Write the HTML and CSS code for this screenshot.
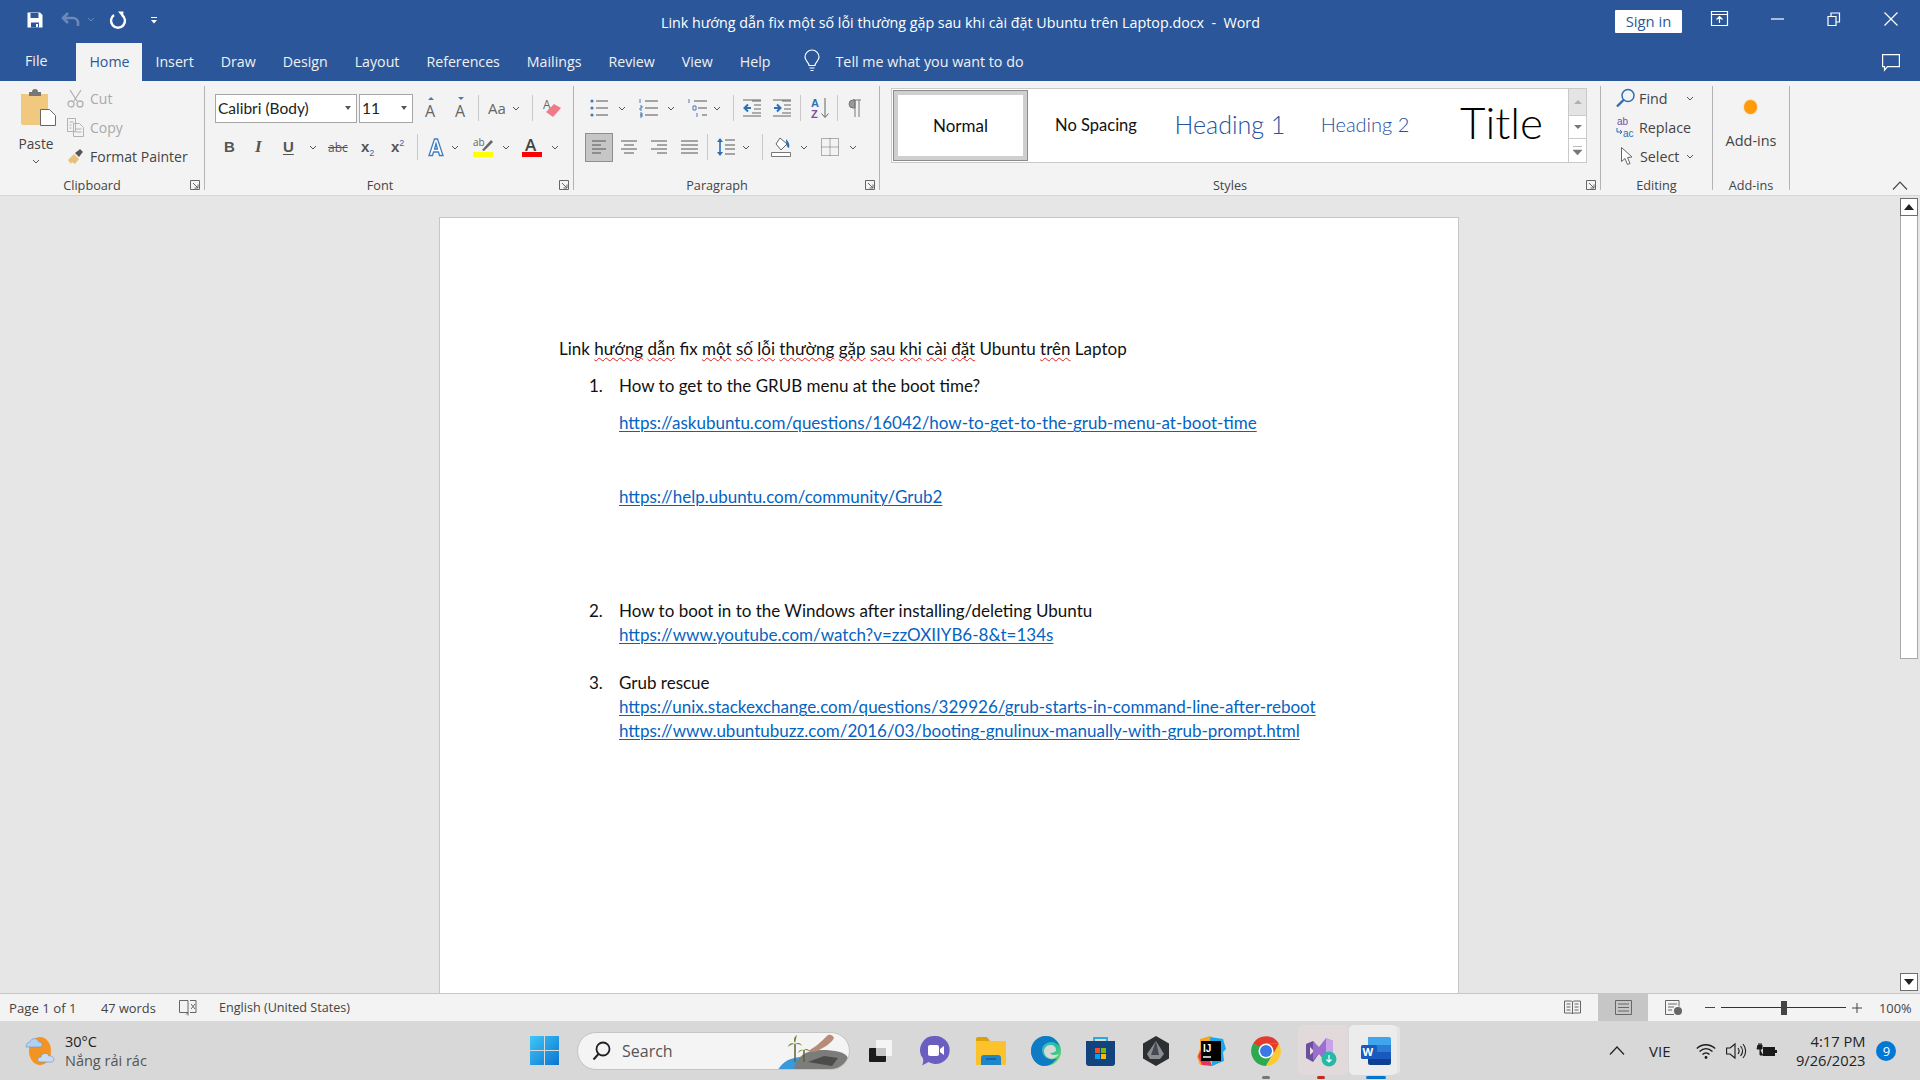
FILE: index.html
```html
<!DOCTYPE html>
<html lang="en">
<head>
<meta charset="utf-8">
<title>Word</title>
<link rel="stylesheet" href="styles.css">
</head>
<body>
<svg class="sprite"><symbol id="chev" viewBox="0 0 8 5"><path d="M1 1l3 3 3-3" fill="none" stroke="#555" stroke-width="1"/></symbol><symbol id="launch" viewBox="0 0 10 10"><path d="M.5 9.500v-9h9v9zM3 3l5 5M8 4.500V8H4.500" fill="none" stroke="#666" stroke-width="1"/></symbol></svg>
<div class="app">
  <header class="titlebar">
    <div class="qat">
      <svg class="qi" width="16" height="16" viewBox="0 0 16 16"><path d="M.5.500h12.500l2.500 2.500v12.500H.5z" fill="#fff"/><path d="M3.500 1v5h8V1zM4 10.500h8v5H4z" fill="#2b579a"/><path d="M9 12h2v3H9z" fill="#fff"/></svg>
      <svg class="qi undo" width="19" height="16" viewBox="0 0 19 16"><path d="M7 1L2 6l5 5M2 6h10a5 5 0 0 1 5 5v3" fill="none" stroke="#6b88b8" stroke-width="2.600"/></svg>
      <svg class="chev qchev" width="8" height="5" viewBox="0 0 8 5"><path d="M1 1l3 3 3-3" fill="none" stroke="#6b88b8"/></svg>
      <svg class="qi redo" width="18" height="18" viewBox="0 0 18 18"><path d="M5 4a7 7 0 1 0 8 0" fill="none" stroke="#fff" stroke-width="2.400"/><path d="M9 .5l5.500 0-.5 6z" fill="#fff"/></svg>
      <svg class="qi cust" width="8" height="8" viewBox="0 0 8 8"><path d="M1 1h6v1H1zM1 4h6L4 7.500z" fill="#fff"/></svg>
    </div>
    <div class="doc-title">Link hướng dẫn fix một số lỗi thường gặp sau khi cài đặt Ubuntu trên Laptop.docx &nbsp;-&nbsp; Word</div>
    <div class="win">
      <span class="signin">Sign in</span>
      <svg class="w-display" width="17" height="15" viewBox="0 0 17 15"><path d="M.5.500h16v14H.5zM1 3.500h15M8.500 12V6M5.500 8.500l3-3 3 3" fill="none" stroke="#fff" stroke-width="1.200"/></svg>
      <svg class="w-min" width="13" height="2" viewBox="0 0 13 2"><path d="M0 1h13" stroke="#fff" stroke-width="1.200"/></svg>
      <svg class="w-max" width="14" height="14" viewBox="0 0 14 14"><path d="M1 4.500h8v9H1zM4 4.500V1h8.500v9H9" fill="none" stroke="#fff" stroke-width="1.200"/></svg>
      <svg class="w-close" width="14" height="14" viewBox="0 0 14 14"><path d="M.5.500l13 13M13.500.5l-13 13" stroke="#fff" stroke-width="1.200"/></svg>
    </div>
  </header>
  <nav class="tabs">
    <span class="tab tab-file">File</span>
    <span class="tab tab-active">Home</span>
    <span class="tab">Insert</span>
    <span class="tab">Draw</span>
    <span class="tab">Design</span>
    <span class="tab">Layout</span>
    <span class="tab">References</span>
    <span class="tab">Mailings</span>
    <span class="tab">Review</span>
    <span class="tab">View</span>
    <span class="tab">Help</span>
    <svg class="bulb" width="16" height="22" viewBox="0 0 16 22"><path d="M5 15.500c0-3-4-4.500-4-8.500a7 7 0 0 1 14 0c0 4-4 5.500-4 8.500zM5.500 18h5M6.500 20.500h3" fill="none" stroke="#fff" stroke-width="1.200"/></svg>
    <span class="tell">Tell me what you want to do</span>
    <svg class="comment" width="18" height="17" viewBox="0 0 18 17"><path d="M.6.600h16.800v12H5.500l-3 3.500v-3.500H.6z" fill="none" stroke="#fff" stroke-width="1.200"/></svg>
  </nav>
  <section class="ribbon">
    <div class="group g-clip">
      <div class="gbody clip-body">
        <div class="paste">
          <svg class="paste-i" width="35" height="37" viewBox="0 0 35 37"><path d="M0 5h27v31H2a2 2 0 0 1-2-2z" fill="#f0c97f"/><path d="M8 3h3a3 3 0 0 1 6 0h3v4H8z" fill="#767676"/><path d="M19.500 20.500h9l6 6v10h-15z" fill="#fff" stroke="#666"/></svg>
          <span class="paste-t">Paste</span>
          <svg class="chev" width="8" height="5"><use href="#chev"/></svg>
        </div>
        <div class="stack">
          <div class="sbtn dis"><svg width="17" height="19" viewBox="0 0 17 19"><path d="M3 1l7 11M14 1L7 12" stroke="#b3b3b3" stroke-width="1.300"/><circle cx="4" cy="15" r="3" fill="none" stroke="#b3b3b3" stroke-width="1.300"/><circle cx="13" cy="15" r="3" fill="none" stroke="#b3b3b3" stroke-width="1.300"/></svg><span>Cut</span></div>
          <div class="sbtn dis"><svg width="17" height="19" viewBox="0 0 17 19"><path d="M.5.500h8v13h-8zM6.500 5.500h6l4 4v9h-10zM2.500 4h4M2.500 7h2M2.500 10h2M8.500 11h6M8.500 14h6" fill="none" stroke="#b3b3b3"/></svg><span>Copy</span></div>
          <div class="sbtn"><svg width="17" height="17" viewBox="0 0 17 17"><path d="M1 12l6-6 5 5-4 5-3-2-1 2z" fill="#e8c078"/><path d="M8 5l4-3 1-1 3 3-1 1-3 4z" fill="#555"/></svg><span>Format Painter</span></div>
        </div>
      </div>
      <div class="glabel">Clipboard</div>
      <svg class="launch" width="10" height="10"><use href="#launch"/></svg>
    </div>
    <div class="group g-font">
      <div class="gbody rows">
        <div class="tools font-r1">
          <div class="combo combo-font"><span>Calibri (Body)</span><i class="drop"></i></div>
          <div class="combo combo-size"><span>11</span><i class="drop"></i></div>
          <svg width="14" height="22" viewBox="0 0 14 22"><path d="M7 0l3 3H4z" fill="#4a7ab5"/><text x="1" y="20" class="gl">A</text></svg>
          <svg width="14" height="22" viewBox="0 0 14 22"><path d="M7 3l3-3H4z" fill="#4a7ab5"/><text x="1" y="20" class="gl">A</text></svg>
          <i class="vsep"></i>
          <span class="aa">Aa</span>
          <svg class="chev" width="8" height="5"><use href="#chev"/></svg>
          <i class="vsep"></i>
          <svg width="19" height="20" viewBox="0 0 19 20"><text x="0" y="11" class="gl2">A</text><path d="M3 14l8-8 7 4-8 9z" fill="#ee7c88"/></svg>
        </div>
        <div class="tools font-r2">
          <b class="fmt">B</b>
          <i class="fmt it">I</i>
          <span class="fmt ul">U</span>
          <svg class="chev" width="8" height="5"><use href="#chev"/></svg>
          <span class="abc">abc</span>
          <span class="fmt sc">x<sub>2</sub></span>
          <span class="fmt sc">x<sup>2</sup></span>
          <i class="vsep"></i>
          <svg width="16" height="20" viewBox="0 0 16 20"><path d="M1 18.500L6.500 2h3L15 18.500h-3.500l-1-3.500h-5l-1 3.500zM6.500 12h3L8 6.500z" fill="#fff" stroke="#3f7cc0" stroke-width="1.300"/></svg>
          <svg class="chev" width="8" height="5"><use href="#chev"/></svg>
          <svg width="20" height="20" viewBox="0 0 20 20"><text x="0" y="9" class="gl3">ab</text><path d="M9 13l9-10 2 2-9 9z" fill="#666"/><path d="M0 15h20v5H0z" fill="#ff0"/></svg>
          <svg class="chev" width="8" height="5"><use href="#chev"/></svg>
          <svg width="20" height="20" viewBox="0 0 20 20"><text x="3" y="14" class="gl4">A</text><path d="M0 15h20v5H0z" fill="#f00"/></svg>
          <svg class="chev" width="8" height="5"><use href="#chev"/></svg>
        </div>
      </div>
      <div class="glabel">Font</div>
      <svg class="launch" width="10" height="10"><use href="#launch"/></svg>
    </div>
    <div class="group g-para">
      <div class="gbody rows">
        <div class="tools para-r1">
          <svg width="18" height="20" viewBox="0 0 18 20"><path d="M6 3h12M6 10h12M6 17h12" stroke="#555"/><circle cx="2" cy="3" r="1.600" fill="#4a7ab5"/><circle cx="2" cy="10" r="1.600" fill="#4a7ab5"/><circle cx="2" cy="17" r="1.600" fill="#4a7ab5"/></svg>
          <svg class="chev" width="8" height="5"><use href="#chev"/></svg>
          <svg width="20" height="20" viewBox="0 0 20 20"><path d="M7 3h13M7 10h13M7 17h13" stroke="#555"/><path d="M2 1v4M2 8h2v2H2v2h2M2 15h2v2H2h2v2H2" fill="none" stroke="#4a7ab5"/></svg>
          <svg class="chev" width="8" height="5"><use href="#chev"/></svg>
          <svg width="20" height="20" viewBox="0 0 20 20"><path d="M7 3h13M11 10h9M15 17h5" stroke="#555"/><path d="M2 1v4M6 8h3v4H6zM10 15v4" fill="none" stroke="#4a7ab5"/></svg>
          <svg class="chev" width="8" height="5"><use href="#chev"/></svg>
          <i class="vsep"></i>
          <svg width="18" height="18" viewBox="0 0 18 18"><path d="M9 2h9M11 6h7M11 10h7M9 14h9M0 17h18M0 1h18" stroke="#666"/><path d="M8 9H2M5 5.500L1.500 9 5 12.500" fill="none" stroke="#2f6db5" stroke-width="2"/></svg>
          <svg width="18" height="18" viewBox="0 0 18 18"><path d="M9 2h9M11 6h7M11 10h7M9 14h9M0 17h18M0 1h18" stroke="#666"/><path d="M1 9h6M4 5.500L7.500 9 4 12.500" fill="none" stroke="#2f6db5" stroke-width="2"/></svg>
          <i class="vsep"></i>
          <svg width="19" height="22" viewBox="0 0 19 22"><text class="sort"><tspan x="0" y="10" class="sortA">A</tspan><tspan x="0" y="21" class="sortZ">Z</tspan></text><path d="M14 1v19M10.500 16.500L14 20.500l3.500-4" fill="none" stroke="#666"/></svg>
          <i class="vsep"></i>
          <svg width="12" height="18" viewBox="0 0 12 18"><path d="M6 1H4a4 4 0 0 0 0 8h2zM6 1v17M10 1v17M4 1h8" fill="#999" stroke="#777"/></svg>
        </div>
        <div class="tools para-r2">
          <div class="alignbtn"><svg width="14" height="14" viewBox="0 0 14 14"><path d="M0 1h14M0 5h9M0 9h14M0 13h9" stroke="#555"/></svg></div>
          <svg width="16" height="14" viewBox="0 0 16 14"><path d="M0 1h16M3 5h10M0 9h16M3 13h10" stroke="#555"/></svg>
          <svg width="16" height="14" viewBox="0 0 16 14"><path d="M0 1h16M6 5h10M0 9h16M6 13h10" stroke="#555"/></svg>
          <svg width="17" height="14" viewBox="0 0 17 14"><path d="M0 1h17M0 5h17M0 9h17M0 13h17" stroke="#555"/></svg>
          <i class="vsep"></i>
          <svg width="18" height="20" viewBox="0 0 18 20"><path d="M3 4v12" stroke="#2f6db5" stroke-width="1.600"/><path d="M0 5l3-4 3 4zM0 15l3 4 3-4z" fill="#2f6db5"/><path d="M8 3h10M8 8h10M8 12h10M8 17h10" stroke="#555"/></svg>
          <svg class="chev" width="8" height="5"><use href="#chev"/></svg>
          <i class="vsep"></i>
          <svg width="20" height="20" viewBox="0 0 20 20"><path d="M9 1l7 6-6 6-5-6z" fill="#fff" stroke="#666"/><path d="M15 2c3 3 4 6 3 9-2 0-3-4-3-9z" fill="#2f6db5"/><path d="M.5 15.500h19v4H.5z" fill="#fff" stroke="#777"/></svg>
          <svg class="chev" width="8" height="5"><use href="#chev"/></svg>
          <svg width="18" height="18" viewBox="0 0 18 18"><path d="M.5.500h17v17H.5zM9 .5v17M.5 9h17" fill="none" stroke="#666" stroke-dasharray="1 1"/></svg>
          <svg class="chev" width="8" height="5"><use href="#chev"/></svg>
        </div>
      </div>
      <div class="glabel">Paragraph</div>
      <svg class="launch" width="10" height="10"><use href="#launch"/></svg>
    </div>
    <div class="group g-styles">
      <div class="gbody">
        <div class="gallery">
          <div class="styles-list">
            <div class="style s-normal">Normal</div>
            <div class="style s-nospace">No Spacing</div>
            <div class="style s-h1">Heading 1</div>
            <div class="style s-h2">Heading 2</div>
            <div class="style s-title">Title</div>
          </div>
          <div class="gal-scroll">
            <div class="gs gs-up"><svg width="8" height="4" viewBox="0 0 8 4"><path d="M4 0l4 4H0z" fill="#b0b0b0"/></svg></div>
            <div class="gs gs-down"><svg width="8" height="4" viewBox="0 0 8 4"><path d="M4 4l4-4H0z" fill="#777"/></svg></div>
            <div class="gs gs-more"><svg width="9" height="9" viewBox="0 0 9 9"><path d="M0 .5h9M0 4h9L4.500 9z" fill="#777" stroke="#777" stroke-width=".5"/></svg></div>
          </div>
        </div>
      </div>
      <div class="glabel">Styles</div>
      <svg class="launch" width="10" height="10"><use href="#launch"/></svg>
    </div>
    <div class="group g-edit">
      <div class="gbody stack edit-stack">
        <div class="sbtn"><svg width="19" height="20" viewBox="0 0 19 20"><circle cx="12" cy="7.500" r="6" fill="none" stroke="#2f6db5" stroke-width="1.500"/><path d="M7.500 12L1 18.500" stroke="#2f6db5" stroke-width="2.400"/></svg><span>Find</span><svg class="chev e-chev1" width="8" height="5"><use href="#chev"/></svg></div>
        <div class="sbtn"><svg width="19" height="20" viewBox="0 0 19 20"><text class="rep"><tspan x="1" y="8" class="ab">ab</tspan><tspan x="7" y="19.500" class="ac">ac</tspan></text><path d="M1 11v4h5M4 13l2 2-2 2" fill="none" stroke="#2f6db5"/></svg><span>Replace</span></div>
        <div class="sbtn"><svg class="sel-i" width="11" height="18" viewBox="0 0 11 18"><path d="M.5.500v14l3.500-3 2.500 6 2.500-1-2.500-6 4.500-.5z" fill="#fff" stroke="#666"/></svg><span>Select</span><svg class="chev e-chev2" width="8" height="5"><use href="#chev"/></svg></div>
      </div>
      <div class="glabel">Editing</div>
    </div>
    <div class="group g-add">
      <div class="gbody addins"><i class="dot"></i><span>Add-ins</span></div>
      <div class="glabel">Add-ins</div>
    </div>
    <svg class="collapse" width="16" height="9" viewBox="0 0 16 9"><path d="M1 8.500L8 1l7 7.500" fill="none" stroke="#444" stroke-width="1.100"/></svg>
  </section>
  <main class="workspace">
    <div class="canvas">
      <article class="page">
        <p class="line first">Link <span class="sq">hướng</span> <span class="sq">dẫn</span> fix <span class="sq">một</span> <span class="sq">số</span> <span class="sq">lỗi</span> <span class="sq">thường</span> <span class="sq">gặp</span> <span class="sq">sau</span> <span class="sq">khi</span> <span class="sq">cài</span> <span class="sq">đặt</span> Ubuntu <span class="sq">trên</span> Laptop</p>
        <p class="line item"><span class="num">1.</span>How to get to the GRUB menu at the boot time?</p>
        <p class="line cont"><a class="lnk">https://askubuntu.com/questions/16042/how-to-get-to-the-grub-menu-at-boot-time</a></p>
        <p class="line cont">&nbsp;</p>
        <p class="line cont"><a class="lnk">https://help.ubuntu.com/community/Grub2</a></p>
        <p class="line cont">&nbsp;</p>
        <p class="line cont tail">&nbsp;</p>
        <p class="line item tight"><span class="num">2.</span>How to boot in to the Windows after installing/deleting Ubuntu</p>
        <p class="line cont tight"><a class="lnk">https://www.youtube.com/watch?v=zzOXIIYB6-8&amp;t=134s</a></p>
        <p class="line cont tight blank">&nbsp;</p>
        <p class="line item tight"><span class="num">3.</span>Grub rescue</p>
        <p class="line cont tight"><a class="lnk">https://unix.stackexchange.com/questions/329926/grub-starts-in-command-line-after-reboot</a></p>
        <p class="line cont tight"><a class="lnk">https://www.ubuntubuzz.com/2016/03/booting-gnulinux-manually-with-grub-prompt.html</a></p>
      </article>
    </div>
    <aside class="vscroll">
      <div class="sb-btn"><svg width="10" height="6" viewBox="0 0 10 6"><path d="M5 0l5 6H0z" fill="#222"/></svg></div>
      <div class="sb-thumb"></div>
      <div class="sb-track"></div>
      <div class="sb-btn"><svg width="10" height="6" viewBox="0 0 10 6"><path d="M5 6l5-6H0z" fill="#222"/></svg></div>
    </aside>
  </main>
  <footer class="status">
    <span class="st-page">Page 1 of 1</span>
    <span class="st-words">47 words</span>
    <svg class="st-proof" width="18" height="17" viewBox="0 0 18 17"><path d="M9 1.500H.5v12H9m0-12v15m0-3l-2 2" fill="none" stroke="#666"/><path d="M11 1.500h6M11 13.500h6M17 1.500v12M12 5l4 5M16 5l-4 5" fill="none" stroke="#666"/></svg>
    <span class="st-lang">English (United States)</span>
    <div class="st-right">
      <svg class="st-read" width="17" height="15" viewBox="0 0 17 15"><path d="M.5 1h7l1 1 1-1h7v12h-7l-1 1-1-1h-7zM8.500 2v12M2.500 4h4M2.500 7h4M2.500 10h4M10.500 4h4M10.500 7h4M10.500 10h4" fill="none" stroke="#666"/></svg>
      <div class="st-print"><svg width="17" height="15" viewBox="0 0 17 15"><path d="M.5.500h16v14H.5zM3 4h11M3 7.500h11M3 11h11" fill="none" stroke="#666"/></svg></div>
      <svg class="st-web" width="17" height="15" viewBox="0 0 17 15"><path d="M9 14.500H.5V.5H14v6M3 4h9M3 7h6M3 10h4" fill="none" stroke="#666"/><circle cx="13" cy="11" r="4" fill="#666"/></svg>
      <i class="z-minus"></i>
      <div class="slider"><i class="thumb"></i></div>
      <svg class="z-plus" width="10" height="10" viewBox="0 0 10 10"><path d="M0 5h10M5 0v10" stroke="#444"/></svg>
      <span class="zoom-val">100%</span>
    </div>
  </footer>
  <div class="taskbar">
    <div class="weather">
      <svg width="32" height="30" viewBox="0 0 32 30"><ellipse cx="15" cy="15" rx="11" ry="14" fill="#f39322"/><path d="M1 11c0-4 3-5 4-5 1-4 7-5 9 0 4 0 4 5 1 5z" fill="#b5d0ef" stroke="#6f9ad0" stroke-width=".7"/><path d="M15 26c-3 0-3-5 1-5 0-4 7-5 8-1 5-1 7 6 2 6z" fill="#c9dcf3" stroke="#6f9ad0" stroke-width=".7"/></svg>
      <div class="w-text"><span class="w-temp">30°C</span><span class="w-desc">Nắng rải rác</span></div>
    </div>
    <svg class="winlogo" width="29" height="29" viewBox="0 0 29 29"><defs><linearGradient id="wl" x1="0" y1="0" x2="1" y2="1"><stop offset="0" stop-color="#3ec8f8"/><stop offset="1" stop-color="#0a74d0"/></linearGradient></defs><path d="M0 0h14v14H0zM15 0h14v14H15zM0 15h14v14H0zM15 15h14v14H15z" fill="url(#wl)"/></svg>
    <div class="search">
      <svg class="s-ico" width="19" height="20" viewBox="0 0 19 20"><circle cx="11" cy="8" r="6.500" fill="none" stroke="#222" stroke-width="1.800"/><path d="M6.500 13L1.500 18.500" stroke="#222" stroke-width="2"/></svg>
      <span>Search</span>
      <svg class="scene" width="70" height="38" viewBox="0 0 70 38"><path d="M0 38c4-8 12-12 22-13v13z" fill="#3a9ad9"/><path d="M16 38c2-14 12-20 28-20 12 0 24 2 26 8v6c-2 4-6 6-10 6z" fill="#7c7c7a"/><path d="M30 30l16-6 14 2-6 8z" fill="#4c4c4c"/><path d="M30 19c6-3 12-8 20-16 2-1 5 0 6 3-3 6-12 11-20 14z" fill="#b88a78"/><path d="M17 30V12M26 30V18" stroke="#6b5a3a" stroke-width="1.500"/><path d="M17 12c-4-2-6 0-7 3 2-2 4-3 7-3 3-2 6-1 7 2-2-2-4-2-7-2zM17 11c-2-3-1-6 2-8-1 3-1 5-2 8z" fill="#6b8a2a"/><path d="M26 18c-3-1-5 0-6 3 2-2 4-3 6-3 2-2 5-1 6 2-2-2-4-2-6-2z" fill="#6b8a2a"/></svg>
    </div>
    <div class="apps">
      <div class="app-i"><svg width="23" height="22" viewBox="0 0 23 22"><rect x="0" y="8" width="17" height="14" rx="1" fill="#1c1c1c"/><rect x="7" y="0" width="16" height="16" rx="1" fill="#fff" opacity=".75"/></svg></div>
      <div class="app-i"><svg width="29" height="31" viewBox="0 0 29 31"><path d="M14.500 1a14 14 0 1 1-7 26L1 30.500c1-2 1.500-4 1-7A14 14 0 0 1 14.500 1z" fill="#6a5fc1"/><rect x="7" y="10" width="11" height="11" rx="2" fill="#fff"/><path d="M19 14l4-3v9l-4-3z" fill="#fff"/></svg></div>
      <div class="app-i"><svg width="30" height="28" viewBox="0 0 30 28"><path d="M0 2a2 2 0 0 1 2-2h9l3 4h-14z" fill="#dca10a"/><path d="M0 4h30v24H0z" fill="#fcc22c"/><path d="M5 21a3 3 0 0 1 3-3h14a3 3 0 0 1 3 3v7H5z" fill="#1f86c9"/><path d="M10 22h10" stroke="#0a4a7c" stroke-width="1"/></svg></div>
      <div class="app-i"><svg width="30" height="30" viewBox="0 0 30 30"><defs><linearGradient id="eg" x1="0" y1="0" x2="1" y2="1"><stop offset="0" stop-color="#35c1f1"/><stop offset=".6" stop-color="#2bbf9b"/><stop offset="1" stop-color="#7de24a"/></linearGradient></defs><circle cx="15" cy="15" r="15" fill="url(#eg)"/><path d="M0 15C0 7 6 0 15 0c7 0 12 5 13 10-3-4-8-5-12-3-5 2-6 7-4 11 2 5 9 7 14 4-3 5-8 8-13 8C6 30 0 23 0 15z" fill="#0e7bc4"/><path d="M13 15c0-3 3-6 6-6 4 0 6 2 6 5 0 2-3 3-6 3 1 2 5 3 9 1-3 5-9 6-12 3-2-1-3-4-3-6z" fill="#d8d8d8"/></svg></div>
      <div class="app-i"><svg width="29" height="30" viewBox="0 0 29 30"><path d="M8 6V2h13v4" fill="none" stroke="#27a8e0" stroke-width="1.800"/><path d="M0 5h29v22a3 3 0 0 1-3 3H3a3 3 0 0 1-3-3z" fill="#13437e"/><path d="M9 12h5v5H9z" fill="#f25022"/><path d="M15 12h5v5h-5z" fill="#7fba00"/><path d="M9 18h5v5H9z" fill="#00a4ef"/><path d="M15 18h5v5h-5z" fill="#ffb900"/></svg></div>
      <div class="app-i"><svg width="26" height="30" viewBox="0 0 26 30"><path d="M13 0l13 7.500v15L13 30 0 22.500v-15z" fill="#2d2f33"/><path d="M13 5l8 13-4 5H7l-3-5z" fill="#8a8d93"/><path d="M13 5l3 14H8z" fill="#46494f"/></svg></div>
      <div class="app-i"><svg width="30" height="30" viewBox="0 0 30 30"><path d="M4 3l10-3 4 4-4 24-10 1-3-8 3-8z" fill="#f5a623"/><path d="M2 20l6-12 8 22-10-1z" fill="#e8335a"/><path d="M14 1l13 2 3 10-3 3 1 9-12 5z" fill="#18a7e8"/><rect x="5" y="5" width="20" height="20" fill="#000"/><text x="7" y="16" class="ij">IJ</text><path d="M7 21h8" stroke="#fff" stroke-width="1.500"/></svg></div>
      <div class="app-i has-dot"><svg width="30" height="30" viewBox="0 0 30 30"><path d="M15 15L2.100 7.500A15 15 0 0 1 27.900 7.500z" fill="#e33b2e"/><path d="M2.100 7.500A15 15 0 0 0 15 30l7.500-13z" fill="#2da94f"/><path d="M27.900 7.500A15 15 0 0 1 15 30l7.500-13L15 7.500z" fill="#fcc934"/><path d="M15 7.500h12.900l-5 9z" fill="#e33b2e"/><circle cx="15" cy="15" r="7.500" fill="#fff"/><circle cx="15" cy="15" r="6" fill="#3b78e7"/></svg><i class="ind ind-gray"></i></div>
      <div class="app-i act-vs"><svg width="30" height="30" viewBox="0 0 30 30"><path d="M0 8l7-3 8 10-8 11-7-4z" fill="#6c4f9e"/><path d="M4 11l4 4-4 4z" fill="#e8e1e1"/><path d="M7 5l6 6 7-9 7 3v19l-7 3-7-9-6 6" fill="#9a6fcf"/><path d="M20 2l7 3v19l-7 3z" fill="#c9a3ea"/><circle cx="23" cy="23" r="7.500" fill="#27b9a5"/><path d="M23 19v7M20.500 23.500L23 26l2.500-2.500" fill="none" stroke="#fff" stroke-width="1.200"/></svg><i class="ind ind-red"></i></div>
      <div class="app-i act-word"><svg width="30" height="28" viewBox="0 0 30 28"><path d="M7 0h21a2 2 0 0 1 2 2v6H7z" fill="#41a5ee"/><path d="M7 8h23v7H7z" fill="#2b7cd3"/><path d="M7 15h23v7H7z" fill="#185abd"/><path d="M7 22h23v4a2 2 0 0 1-2 2H9a2 2 0 0 1-2-2z" fill="#103f91"/><rect x="0" y="8" width="16" height="14" rx="1.500" fill="#185abd"/><text x="1.500" y="19" class="wd">W</text></svg><i class="ind ind-blue"></i></div>
    </div>
    <div class="tray">
      <svg class="t-chev" width="16" height="9" viewBox="0 0 16 9"><path d="M1 8.500L8 1l7 7.500" fill="none" stroke="#222" stroke-width="1.200"/></svg>
      <span class="t-lang">VIE</span>
      <svg class="t-wifi" width="20" height="16" viewBox="0 0 20 16"><path d="M.8 5.500c5-5 13-5 18.400 0M3.500 8.500c4-3.500 9-3.500 13 0M6.500 11.500c2-2 5-2 7 0" fill="none" stroke="#1a1a1a" stroke-width="1.300"/><circle cx="10" cy="14.500" r="1.400" fill="#1a1a1a"/></svg>
      <svg class="t-vol" width="20" height="16" viewBox="0 0 20 16"><path d="M.6 5h3.500L9 1v14l-5-4H.6zM12 5c1.500 2 1.500 4 0 6M14.500 3c2.500 3 2.500 7 0 10M17 1c3.500 4 3.500 10 0 14" fill="none" stroke="#1a1a1a" stroke-width="1.100"/></svg>
      <svg class="t-batt" width="20" height="16" viewBox="0 0 20 16"><path d="M6 4h12v9H6zM18 7h2v3h-2z" fill="#1a1a1a"/><path d="M0 6h5V2H1zM2 0v3M4 0v3M3 6v6h3" fill="#1a1a1a" stroke="#1a1a1a"/></svg>
      <div class="clock"><span>4:17 PM</span><span>9/26/2023</span></div>
      <span class="badge">9</span>
    </div>
  </div>
</div>
</body>
</html>
```

FILE: styles.css
```css
* { box-sizing: border-box; }
html, body { margin: 0; height: 100%; overflow: hidden; }
body { font-family: "Open Sans", "Noto Sans", sans-serif; color: #444; font-size: 13px; }
svg { display: block; flex: none; overflow: visible; }
i { font-style: normal; }
.sprite { display: none; }
.app { width: 1920px; height: 1080px; display: flex; flex-direction: column; }

/* title bar */
.titlebar { height: 40px; background: #2b579a; display: flex; align-items: center; color: #fff; }
.qat { width: 661px; flex: none; display: flex; align-items: center; padding-left: 27px; margin-top: -1px; }
.undo { margin-left: 18px; }
.qchev { margin-left: 7px; }
.redo { margin-left: 14px; }
.cust { margin-left: 23px; }
.doc-title { width: 610px; flex: none; font-size: 14.300px; white-space: nowrap; margin-top: 4px; }
.win { flex: 1; display: flex; align-items: center; margin-left: 344px; }
.signin { width: 67px; height: 23px; background: #fff; color: #2b579a; border-radius: 1px; text-align: center; font-size: 14.800px; line-height: 23px; margin-top: 3px; }
.w-display { margin-left: 29px; margin-top: -3px; }
.w-min { margin-left: 43px; margin-top: -3px; }
.w-max { margin-left: 43px; margin-top: -3px; }
.w-close { margin-left: 43px; margin-top: -2px; }

/* tabs */
.tabs { height: 41px; background: #2b579a; display: flex; align-items: center; gap: 27px; padding-left: 25px; color: #f1f1f1; position: relative; }
.tab { font-size: 14.200px; line-height: 38px; margin-top: 3px; white-space: nowrap; }
.tab-file { margin-right: 1px; margin-top: 0; }
.tab-active { background: #f3f3f3; color: #2b579a; width: 66px; text-align: center; margin-left: 1px; margin-right: -14px; }
.bulb { margin-left: 6px; margin-right: -11px; }
.tell { font-size: 14.300px; white-space: nowrap; margin-top: 1px; }
.comment { margin-left: auto; margin-right: 20px; margin-top: 3px; }

/* ribbon */
.ribbon { height: 115px; background: #f3f3f3; border-bottom: 1px solid #d6d6d6; display: flex; align-items: flex-start; padding-top: 5px; position: relative; }
.group { height: 104px; border-right: 1px solid #b4b4b4; display: flex; flex-direction: column; position: relative; flex: none; }
.gbody { height: 90px; flex: none; }
.glabel { font-size: 12.700px; line-height: 14px; height: 14px; flex: none; text-align: center; margin-top: 2px; color: #444; white-space: nowrap; }
.launch { position: absolute; right: 4px; bottom: 0; }
.g-clip { width: 205px; }
.g-font { width: 369px; }
.g-para { width: 306px; }
.g-styles { width: 721px; }
.g-edit { width: 112px; }
.g-add { width: 77px; }
.g-clip .glabel { padding-right: 20px; }
.g-font .glabel { padding-right: 18px; }
.g-para .glabel { padding-right: 19px; }
.g-styles .glabel { padding-right: 20px; }

.clip-body { display: flex; }
.paste { width: 44px; margin-left: 14px; padding-top: 3px; display: flex; flex-direction: column; align-items: center; }
.paste-i { margin-left: 5px; }
.paste-t { font-size: 13.700px; line-height: 18px; margin-top: 9px; }
.paste .chev { margin-top: 6px; }
.stack { display: flex; flex-direction: column; gap: 5px; margin-left: 9px; }
.sbtn { height: 24px; display: flex; align-items: center; gap: 6px; font-size: 14px; white-space: nowrap; }
.sbtn.dis { color: #a9a9a9; }
.edit-stack { margin-left: 15px; gap: 5px; }
.edit-stack .sbtn { gap: 4px; font-size: 14.300px; }
.sel-i { margin: 0 4px 0 5px; }
.e-chev1 { margin-left: 14px; }
.e-chev2 { margin-left: 3px; }

.rows { display: flex; flex-direction: column; gap: 9px; padding-top: 7px; }
.tools { display: grid; grid-auto-flow: column; justify-content: start; justify-items: start; align-items: center; height: 30px; }
.font-r1 { margin-left: 10px; grid-template-columns: 144px 65px 30px 24px 10px 24px 20px 11px auto; }
.font-r2 { margin-left: 19px; grid-template-columns: 31px 28px 26px 19px 33px 30px 26px 11px 23px 22px 29px 20px 29px auto; }
.para-r1 { margin-left: 16px; grid-template-columns: 28px 20px 29px 20px 26px 20px 10px 30px 27px 11px 26px 12px auto; }
.para-r2 { margin-left: 11px; grid-template-columns: 36px 30px 30px 26px 10px 25px 20px 9px 29px 21px 28px auto; }
.vsep { display: block; width: 1px; height: 26px; background: #c9c9c9; }
.combo { height: 29px; background: #fff; border: 1px solid #a6a6a6; display: flex; align-items: center; padding: 0 2px; font-family: Lato, sans-serif; font-size: 15.500px; justify-content: space-between; color: #222; }
.combo-font { width: 142px; }
.combo-size { width: 54px; }
.drop { width: 0; height: 0; border: 3.500px solid transparent; border-top: 4px solid #555; border-bottom: 0; margin-right: 3px; }
.gl { font-size: 16px; fill: #666; font-family: "Open Sans", sans-serif; }
.gl2 { font-size: 12px; fill: #666; font-family: "Open Sans", sans-serif; }
.gl3 { font-size: 10px; fill: #666; font-family: "Open Sans", sans-serif; }
.gl4 { font-size: 17px; fill: #444; font-family: "Open Sans", sans-serif; font-weight: 600; }
.aa { font-size: 15px; color: #666; }
.fmt { font-size: 15px; line-height: 20px; color: #555; font-weight: 700; font-family: "Liberation Sans", sans-serif; }
.it { font-family: "Liberation Serif", serif; font-style: italic; font-size: 17px; }
.ul { text-decoration: underline; text-underline-offset: 2px; }
.abc { font-size: 12px; color: #555; text-decoration: line-through; }
.sc { white-space: nowrap; }
.sc sub, .sc sup { font-size: 9px; color: #2f6db5; font-weight: 400; line-height: 0; }
.sort { font-size: 11px; font-weight: 700; font-family: "Liberation Sans", sans-serif; }
.sortA { fill: #2f6db5; }
.sortZ { fill: #7a4ea3; }
.rep { font-size: 10px; font-family: "Liberation Sans", sans-serif; }
.ab { fill: #7a4ea3; }
.ac { fill: #2f6db5; }
.alignbtn { width: 28px; height: 29px; background: #c6c6c6; border: 1px solid #8f8f8f; display: flex; align-items: center; justify-content: center; }

/* styles gallery */
.gallery { margin: 2px 0 0 11px; width: 696px; height: 75px; display: flex; background: #fff; border: 1px solid #c9c9c9; }
.styles-list { flex: 1; display: flex; padding: 1px; align-items: stretch; color: #111; min-width: 0; }
.style { display: flex; align-items: center; justify-content: center; white-space: nowrap; font-family: Lato, sans-serif; padding-bottom: 2px; }
.s-normal { width: 135px; border: 5px solid #cfcfcf; outline: 1px solid #8c8c8c; outline-offset: -1px; font-size: 17px; padding-bottom: 0; }
.s-nospace { width: 136px; font-size: 16.500px; }
.s-h1 { width: 130px; font-size: 25px; color: #2452a0; font-weight: 300; padding: 0 0 4px 2px; }
.s-h2 { width: 142px; font-size: 20px; color: #2452a0; font-weight: 300; padding-bottom: 4px; }
.s-title { flex: 1; min-width: 0; padding-bottom: 7px; font-size: 44px; font-weight: 300; color: #000; }
.gal-scroll { width: 18px; display: flex; flex-direction: column; border-left: 1px solid #c9c9c9; }
.gs { display: flex; align-items: center; justify-content: center; }
.gs-up { height: 26px; background: #e4e4e4; }
.gs-down { height: 24px; border-bottom: 1px solid #c9c9c9; border-top: 1px solid #c9c9c9; }
.gs-more { flex: 1; }

.addins { display: flex; flex-direction: column; align-items: center; font-size: 14.500px; }
.dot { width: 13px; height: 14px; border-radius: 50%; background: #ff9a0a; margin-top: 14px; margin-right: 2px; box-shadow: 0 0 2px #ffb860; }
.addins span { margin-top: 18px; line-height: 18px; }
.collapse { margin: 95px 0 0 102px; }

/* document area */
.workspace { flex: 1; min-height: 0; background: #e6e6e6; display: flex; overflow: hidden; }
.canvas { flex: 1; min-width: 0; display: flex; justify-content: center; padding-top: 21px; }
.page { width: 1020px; height: 1320px; flex: none; background: #fff; border: 1px solid #c6c6c6; padding: 119px 0 0 119px; font-family: Lato, "Noto Sans", sans-serif; color: #111; font-size: 17px; }
.line { margin: 0 0 13px; line-height: 24px; white-space: nowrap; }
.first { margin-bottom: 13px; }
.item { margin-left: 30px; display: flex; }
.cont { margin-left: 60px; }
.tail { margin-bottom: 16px; }
.tight { margin-bottom: 0; }
.num { width: 30px; flex: none; }
.blank { margin-bottom: 0; }
.lnk { color: #0563c1; text-decoration: underline; text-decoration-thickness: 1px; text-underline-offset: 2px; }
.sq { text-decoration: underline wavy #e02020 1px; text-decoration-skip-ink: none; text-underline-offset: 2px; }

.vscroll { width: 22px; flex: none; padding: 2px 2px 2px 2px; display: flex; flex-direction: column; }
.sb-btn { height: 18px; background: #fff; border: 1px solid #6e6e6e; display: flex; align-items: center; justify-content: center; flex: none; }
.sb-thumb { height: 443px; background: #fff; border: 1px solid #a9a9a9; border-top: 0; flex: none; }
.sb-track { flex: 1; }

/* status bar */
.status { height: 28px; background: #f3f3f3; border-top: 1px solid #c6c6c6; display: flex; align-items: center; font-size: 12.800px; color: #444; flex: none; }
.st-page { margin-left: 9px; width: 92px; white-space: nowrap; font-size: 13.200px; }
.st-words { width: 78px; white-space: nowrap; }
.st-proof { margin-right: 22px; }
.st-lang { white-space: nowrap; font-size: 12.600px; }
.st-right { margin-left: auto; display: flex; align-items: center; height: 100%; }
.st-read { margin-right: 17px; }
.st-print { width: 50px; height: 100%; background: #c6c6c6; display: flex; align-items: center; justify-content: center; }
.st-web { margin-left: 17px; }
.z-minus { display: block; width: 10px; height: 1px; background: #444; margin-left: 23px; }
.slider { width: 125px; height: 1px; background: #333; margin-left: 6px; display: flex; align-items: center; padding-left: 60px; }
.thumb { display: block; width: 6px; height: 14px; background: #444; flex: none; }
.z-plus { margin-left: 6px; }
.zoom-val { margin-left: 17px; width: 41px; white-space: nowrap; }

/* taskbar */
.taskbar { height: 59px; background: #d8d8d8; display: flex; align-items: center; flex: none; color: #222; }
.weather { width: 530px; flex: none; display: flex; align-items: center; padding-left: 25px; gap: 8px; }
.w-text { display: flex; flex-direction: column; font-size: 14.500px; line-height: 19px; white-space: nowrap; }
.w-desc { color: #555; }
.search { width: 273px; height: 38px; margin-left: 18px; background: #f4f4f4; border-radius: 19px; border: 1px solid #c4c4c4; display: flex; align-items: center; padding-left: 14px; gap: 11px; font-size: 16px; color: #555; position: relative; overflow: hidden; flex: none; }
.scene { margin-left: auto; margin-right: 1px; }
.apps { display: flex; height: 100%; flex: none; margin-left: 3px; }
.app-i { width: 55px; display: flex; align-items: center; justify-content: center; position: relative; }
.act-vs::before, .act-word::before { content: ""; position: absolute; z-index: 0; top: 4px; bottom: 5px; border-radius: 5px; }
.act-vs::before { left: 5px; right: 0; background: #e2dada; }
.act-word::before { left: 1px; right: 6px; background: #ececec; box-shadow: 4px 0 0 -1px #e4e4e4; }
.app-i svg { position: relative; z-index: 1; }
.ind { position: absolute; z-index: 1; bottom: 1px; height: 3px; border-radius: 2px; left: 50%; transform: translateX(-50%); }
.ind-gray { width: 8px; background: #777; }
.ind-red { width: 8px; background: #c42b1c; }
.ind-blue { width: 20px; background: #0078d4; }
.ij { font-size: 10px; font-weight: 700; fill: #fff; font-family: "Liberation Sans", sans-serif; }
.wd { font-size: 11px; font-weight: 700; fill: #fff; font-family: "Open Sans", sans-serif; }
.tray { flex: 1; display: flex; align-items: center; }
.t-chev { margin-left: 206px; }
.t-lang { font-size: 15px; margin-left: 24px; }
.t-wifi { margin-left: 26px; }
.t-vol { margin-left: 10px; }
.t-batt { margin-left: 11px; }
.clock { margin-left: 19px; width: 69px; display: flex; flex-direction: column; align-items: flex-end; font-size: 14.700px; line-height: 19px; white-space: nowrap; }
.badge { width: 20px; height: 20px; border-radius: 50%; background: #0078d4; color: #fff; font-size: 13px; line-height: 20px; text-align: center; margin-left: 11px; }
```
